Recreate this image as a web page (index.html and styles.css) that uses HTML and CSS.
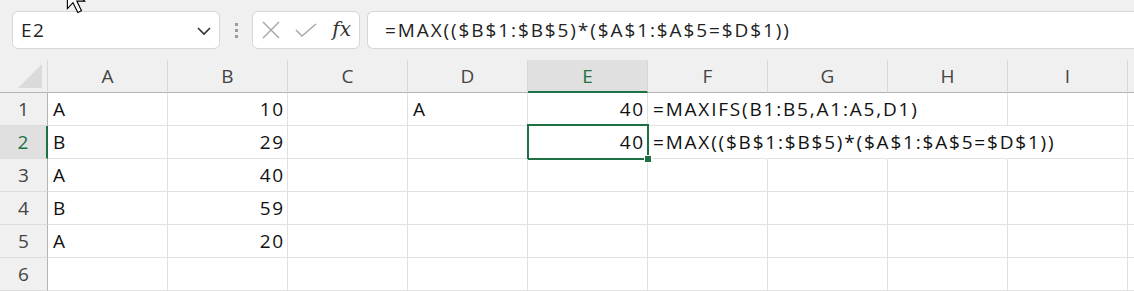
FILE: index.html
```html
<!DOCTYPE html>
<html lang="en">
<head>
    <meta charset="UTF-8">
    <meta name="viewport" content="width=device-width, initial-scale=1.0">
    <link rel="stylesheet" href="styles.css">
</head>
<body>
    <div class="toolbar">
        <div class="namebox">
            <span>E2</span>
            <svg class="chevron" width="16" height="10" viewBox="0 0 16 10">
                <path d="M2 2 L8 8 L14 2" fill="none" stroke="#333" stroke-width="1.6"/>
            </svg>
        </div>
        <div class="grip">
            <span class="dot"></span>
            <span class="dot"></span>
            <span class="dot"></span>
        </div>
        <div class="fxbox">
            <svg width="18" height="18" viewBox="0 0 18 18">
                <path d="M1 1 L17 17 M17 1 L1 17" stroke="#a8a8a8" stroke-width="1.5"/>
            </svg>
            <svg width="22" height="14" viewBox="0 0 22 14">
                <path d="M1 7 L7 13 L21 1" fill="none" stroke="#a8a8a8" stroke-width="1.5"/>
            </svg>
            <span class="fx">fx</span>
        </div>
        <div class="formula">=MAX(($B$1:$B$5)*($A$1:$A$5=$D$1))</div>
    </div>

    <!-- mouse pointer left over the toolbar -->
    <svg class="pointer" width="22" height="32" viewBox="0 0 13 20">
        <path d="M0.5 0.5 L0.5 16 L4 12.3 L7 18.5 L9.3 17.4 L6.4 11.3 L11.3 11.3 Z" fill="#fff" stroke="#000" stroke-width="0.7"/>
    </svg>

    <div class="sheet">
        <div class="corner">
            <svg width="26" height="26" viewBox="0 0 26 26"><path d="M24 1 L24 25 L0 25 Z" fill="#dadada"/></svg>
        </div>
        <div class="colhead">A</div>
        <div class="colhead">B</div>
        <div class="colhead">C</div>
        <div class="colhead">D</div>
        <div class="colhead active">E</div>
        <div class="colhead">F</div>
        <div class="colhead">G</div>
        <div class="colhead">H</div>
        <div class="colhead">I</div>
        <div class="colhead"></div>

        <div class="rowhead">1</div>
        <div class="cell">A</div>
        <div class="cell num">10</div>
        <div class="cell"></div>
        <div class="cell">A</div>
        <div class="cell num">40</div>
        <div class="cell no-r">=MAXIFS(B1:B5,A1:A5,D1)</div>
        <div class="cell no-r"></div>
        <div class="cell"></div>
        <div class="cell"></div>
        <div class="cell"></div>

        <div class="rowhead active">2</div>
        <div class="cell">B</div>
        <div class="cell num">29</div>
        <div class="cell"></div>
        <div class="cell"></div>
        <div class="cell num selected">40</div>
        <div class="cell no-r">=MAX(($B$1:$B$5)*($A$1:$A$5=$D$1))</div>
        <div class="cell no-r"></div>
        <div class="cell no-r"></div>
        <div class="cell"></div>
        <div class="cell"></div>

        <div class="rowhead">3</div>
        <div class="cell">A</div>
        <div class="cell num">40</div>
        <div class="cell"></div>
        <div class="cell"></div>
        <div class="cell"></div>
        <div class="cell"></div>
        <div class="cell"></div>
        <div class="cell"></div>
        <div class="cell"></div>
        <div class="cell"></div>

        <div class="rowhead">4</div>
        <div class="cell">B</div>
        <div class="cell num">59</div>
        <div class="cell"></div>
        <div class="cell"></div>
        <div class="cell"></div>
        <div class="cell"></div>
        <div class="cell"></div>
        <div class="cell"></div>
        <div class="cell"></div>
        <div class="cell"></div>

        <div class="rowhead">5</div>
        <div class="cell">A</div>
        <div class="cell num">20</div>
        <div class="cell"></div>
        <div class="cell"></div>
        <div class="cell"></div>
        <div class="cell"></div>
        <div class="cell"></div>
        <div class="cell"></div>
        <div class="cell"></div>
        <div class="cell"></div>

        <div class="rowhead">6</div>
        <div class="cell"></div>
        <div class="cell"></div>
        <div class="cell"></div>
        <div class="cell"></div>
        <div class="cell"></div>
        <div class="cell"></div>
        <div class="cell"></div>
        <div class="cell"></div>
        <div class="cell"></div>
        <div class="cell"></div>
    </div>
</body>
</html>
```

FILE: styles.css
```css
body {
    margin: 0;
    font-family: "Open Sans", sans-serif;
    background: #ffffff;
    overflow: hidden;
    position: relative;
}

.toolbar {
    height: 60px;
    box-sizing: border-box;
    background: #f0f0f0;
    display: flex;
    align-items: flex-start;
    padding-top: 11px;
    padding-left: 12px;
}

.namebox,
.fxbox,
.formula {
    height: 38px;
    box-sizing: border-box;
    background: #ffffff;
    border: 1px solid #d6d6d6;
    border-radius: 6px;
    display: flex;
    align-items: center;
}

.namebox {
    width: 208px;
    justify-content: space-between;
    padding: 0 7px 0 8px;
    font-size: 19px;
    letter-spacing: 1.5px;
    color: #222;
}

.chevron {
    margin-top: 1px;
}

.grip {
    width: 32px;
    height: 38px;
    display: flex;
    flex-direction: column;
    align-items: center;
    justify-content: center;
    gap: 3px;
}

.dot {
    width: 3px;
    height: 3px;
    background: #9a9a9a;
}

.fxbox {
    width: 108px;
    padding: 0 8px 0 9px;
    justify-content: space-between;
}

.fx {
    font-family: "DejaVu Serif", "Liberation Serif", serif;
    font-style: italic;
    font-size: 20px;
    color: #333;
    margin-top: -2px;
}

/* the bar continues past the right edge of the window */
.formula {
    flex: 1;
    margin-left: 7px;
    border-right: none;
    border-radius: 6px 0 0 6px;
    padding-left: 17px;
    font-size: 19px;
    letter-spacing: 1.9px;
    color: #222;
    white-space: nowrap;
}

.pointer {
    position: absolute;
    left: 66px;
    top: -17px;
}

.sheet {
    display: grid;
    grid-template-columns: 48px repeat(9, 120px) 1fr;
    grid-template-rows: 33px;
    grid-auto-rows: 33px;
    font-size: 19px;
}

.corner,
.colhead,
.rowhead {
    background: #f0f0f0;
    color: #444;
    box-sizing: border-box;
    display: flex;
    align-items: center;
    justify-content: center;
}

.corner {
    border-right: 1px solid #d8d8d8;
    border-bottom: 1px solid #b4b4b4;
    justify-content: flex-end;
    align-items: flex-end;
    padding: 0 3px 3px 0;
}

.colhead {
    border-bottom: 1px solid #b4b4b4;
    border-right: 1px solid #d8d8d8;
}

.colhead.active {
    background: #e0e0e0;
    color: #1e7145;
    border-bottom: 2px solid #1e7145;
}

.rowhead {
    border-right: 1px solid #b4b4b4;
    border-bottom: 1px solid #dcdcdc;
}

.rowhead.active {
    background: #e0e0e0;
    color: #1e7145;
    border-right: 2px solid #1e7145;
}

.cell {
    box-sizing: border-box;
    border-right: 1px solid #e1e1e1;
    border-bottom: 1px solid #e1e1e1;
    padding: 0 4px 0 5px;
    display: flex;
    align-items: center;
    white-space: nowrap;
    letter-spacing: 1.8px;
    color: #111;
    position: relative;
}

.cell.num {
    justify-content: flex-end;
    padding-right: 2px;
}

.cell.no-r {
    border-right-color: transparent;
}

.cell.selected::after {
    content: "";
    position: absolute;
    top: -2px;
    left: -1px;
    right: -2px;
    bottom: -2px;
    border: 2px solid #1e7145;
}

.cell.selected::before {
    content: "";
    position: absolute;
    right: -5px;
    bottom: -5px;
    width: 6px;
    height: 6px;
    background: #1e7145;
    border: 1px solid #ffffff;
    z-index: 2;
}
```
